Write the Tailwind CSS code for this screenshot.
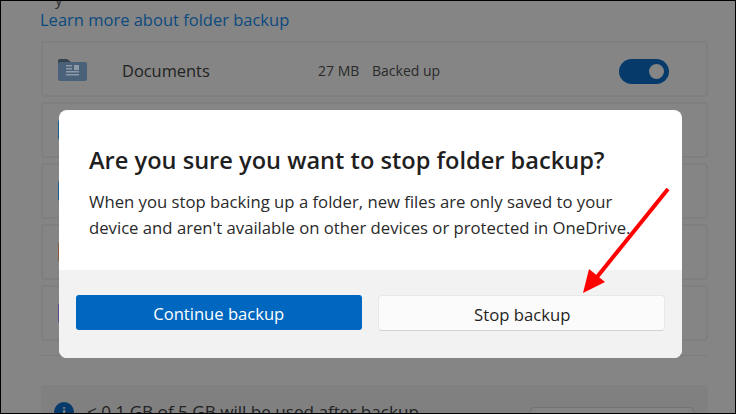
<!DOCTYPE html>
<html lang="en">
<head>
    <meta charset="UTF-8">
    <title>Stop folder backup</title>
    <script src="https://cdn.jsdelivr.net/npm/@tailwindcss/browser@4"></script>
</head>
<body class="m-0 overflow-hidden bg-black font-['Open_Sans','Noto_Sans',sans-serif]">
    <div class="relative h-[414px] w-[736px] overflow-hidden border border-black bg-[#858585]">
        <!-- Page behind the dialog -->
        <div class="flex flex-col pl-[40px] pr-[27px]">
            <p class="-mt-[9px] h-[14px] pl-[14px] text-[15px] leading-[14px] text-[#2a2a2a]">y</p>
            <a class="-ml-px mt-[4px] h-[20px] text-[16.5px] leading-[20px] text-[#0b4a80]">Learn more about folder backup</a>
            <div class="mt-[11px] flex flex-col gap-[5px]">
                <div class="flex h-[56px] items-center rounded-[4px] border-2 border-[#7f7f7f] pl-[15px] pr-[37px]">
                    <svg class="h-[23px] w-[29px]" viewBox="0 0 29 23">
                        <path d="M0 3a2 2 0 0 1 2-2h7l4 3v6H0z" fill="#37424d"/>
                        <rect x="0" y="4" width="29" height="19" rx="2" fill="#4a6279"/>
                        <path d="M8 7h6v1.500H8zM8 10h6v1.500H8zM8 13h13v1.500H8zM8 16h13v1.500H8z" fill="#8d9aa6"/>
                        <rect x="16" y="7" width="5" height="5" fill="#8d9aa6"/>
                    </svg>
                    <span class="ml-[35px] mt-[4px] w-[196px] text-[16.4px] text-[#222]">Documents</span>
                    <span class="mt-[2px] w-[54px] text-[14px] text-[#2a2a2a]">27 MB</span>
                    <span class="mt-[2px] text-[14px] text-[#2a2a2a]">Backed up</span>
                    <span class="ml-auto mt-[4px] flex h-[25px] w-[50px] items-center justify-end rounded-full bg-[#063a6b] pr-[5px]">
                        <span class="h-[15px] w-[15px] rounded-full bg-[#858585]"></span>
                    </span>
                </div>
                <div class="flex h-[56px] items-center rounded-[4px] border-2 border-[#7f7f7f] pl-[15px]">
                    <span class="h-[20px] w-[29px] rounded-[2px] bg-[#1c5c8c]"></span>
                </div>
                <div class="flex h-[56px] items-center rounded-[4px] border-2 border-[#7f7f7f] pl-[15px]">
                    <span class="h-[20px] w-[29px] rounded-[2px] bg-[#1c5c8c]"></span>
                </div>
                <div class="flex h-[56px] items-center rounded-[4px] border-2 border-[#7f7f7f] pl-[15px]">
                    <span class="h-[20px] w-[29px] rounded-[2px] bg-[#8a5a3a]"></span>
                </div>
                <div class="flex h-[56px] items-center rounded-[4px] border-2 border-[#7f7f7f] pl-[15px]">
                    <span class="h-[20px] w-[29px] rounded-[2px] bg-[#5f4a8c]"></span>
                </div>
            </div>
            <div class="mt-[14px] h-px bg-[#7d7d7d]"></div>
            <div class="mt-[29px] flex h-[60px] items-start justify-between rounded-[4px] bg-[#808080] pl-[13px] pr-[14px] pt-[17px]">
                <div class="flex">
                    <span class="flex h-[20px] w-[20px] items-center justify-center rounded-full bg-[#063a6b] text-[13px] font-bold leading-none text-[#858585]">i</span>
                    <span class="ml-[13px] text-[17.1px] leading-[20px] text-[#222]">&lt; 0.1 GB of 5 GB will be used after backup</span>
                </div>
                <span class="mt-[5px] h-[40px] w-[164px] rounded-[4px] border border-[#727272] bg-[#848484]"></span>
            </div>
        </div>

        <!-- Dialog -->
        <div class="absolute left-[58px] top-[109px] flex h-[248px] w-[623px] flex-col overflow-hidden rounded-[8px] bg-white">
            <div class="h-[160px] px-[30px] pt-[35px]">
                <h2 class="text-[23.6px] font-semibold leading-[30px] text-[#1f1f1f]">Are you sure you want to stop folder backup?</h2>
                <p class="mt-[14px] whitespace-nowrap text-[16.7px] leading-[26px] text-[#2a2a2a]">When you stop backing up a folder, new files are only saved to your<br>device and aren't available on other devices or protected in OneDrive.</p>
            </div>
            <div class="flex flex-1 gap-[16px] bg-[#f2f2f2] px-[17px] pt-[25px]">
                <button class="h-[35px] w-[286px] rounded-[3px] bg-[#0067c0] pt-[3px] text-[16.6px] text-white">Continue backup</button>
                <button class="h-[36px] w-[288px] rounded-[4px] border border-[#e8e8e8] border-b-[#d2d2d2] bg-[#fbfbfb] pl-[2px] pt-[3px] text-[16.7px] text-[#1f1f1f]">Stop backup</button>
            </div>
        </div>

        <!-- Red annotation arrow -->
        <svg class="absolute -left-px -top-px" width="736" height="414" viewBox="0 0 736 414">
            <line x1="668" y1="189" x2="597" y2="277" stroke="#ff0000" stroke-width="4"/>
            <polygon points="583,293 589,269 605,282" fill="#ff0000"/>
        </svg>
    </div>
</body>
</html>
